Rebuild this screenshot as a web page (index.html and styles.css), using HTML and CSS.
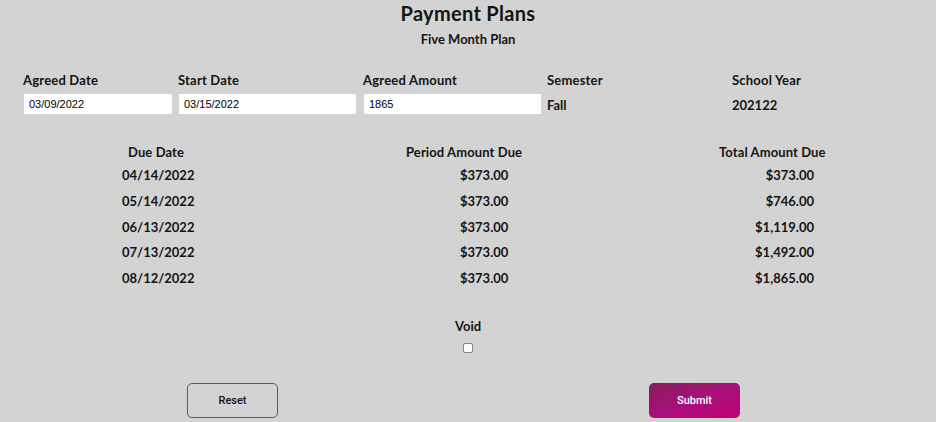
FILE: index.html
```html
<!DOCTYPE html>
<html>
<head>
<meta charset="utf-8">
<link rel="stylesheet" href="styles.css">
</head>
<body>
<div class="page">
  <header class="head">
    <h1 class="title">Payment Plans</h1>
    <h2 class="subtitle">Five Month Plan</h2>
  </header>

  <section class="fields">
    <div class="field f1">
      <label class="lbl">Agreed Date</label>
      <input class="inp w1" type="text" value="03/09/2022">
    </div>
    <div class="field f2">
      <label class="lbl">Start Date</label>
      <input class="inp w2" type="text" value="03/15/2022">
    </div>
    <div class="field f3">
      <label class="lbl">Agreed Amount</label>
      <input class="inp w2" type="text" value="1865">
    </div>
    <div class="field f4">
      <label class="lbl">Semester</label>
      <div class="val">Fall</div>
    </div>
    <div class="field f5">
      <label class="lbl">School Year</label>
      <div class="val">202122</div>
    </div>
  </section>

  <section class="sched">
    <div class="col c1">
      <div class="th">Due Date</div>
      <div class="td">04/14/2022</div>
      <div class="td">05/14/2022</div>
      <div class="td">06/13/2022</div>
      <div class="td">07/13/2022</div>
      <div class="td">08/12/2022</div>
    </div>
    <div class="col c2">
      <div class="th">Period Amount Due</div>
      <div class="td">$373.00</div>
      <div class="td">$373.00</div>
      <div class="td">$373.00</div>
      <div class="td">$373.00</div>
      <div class="td">$373.00</div>
    </div>
    <div class="col c3">
      <div class="th">Total Amount Due</div>
      <div class="td">$373.00</div>
      <div class="td">$746.00</div>
      <div class="td">$1,119.00</div>
      <div class="td">$1,492.00</div>
      <div class="td">$1,865.00</div>
    </div>
  </section>

  <section class="void">
    <div class="void-lbl">Void</div>
    <span class="chk"></span>
  </section>

  <section class="actions">
    <button class="btn reset">Reset</button>
    <button class="btn submit">Submit</button>
  </section>
</div>
</body>
</html>
```

FILE: styles.css
```css
* { box-sizing: border-box; }
html, body { margin: 0; padding: 0; }
body {
  width: 936px;
  height: 422px;
  overflow: hidden;
  background: #d3d3d3;
  font-family: "Lato", "DejaVu Sans", sans-serif;
  font-weight: 700;
  color: #141414;
}
.page { width: 936px; }

.head { text-align: center; padding-top: 1px; }
.title {
  margin: 0;
  font-size: 20px;
  line-height: 24px;
  font-weight: 700;
  letter-spacing: 0.3px;
}
.subtitle {
  margin: 6px 0 0;
  font-size: 13px;
  line-height: 16px;
  font-weight: 700;
}

.fields {
  display: flex;
  padding-left: 23px;
  margin-top: 25px;
}
.field { display: flex; flex-direction: column; }
.f1 { width: 155px; }
.f2 { width: 185px; }
.f3 { width: 184px; }
.f4 { width: 185px; }
.lbl {
  font-size: 13px;
  line-height: 16px;
  letter-spacing: 0.2px;
  height: 22px;
}
.inp {
  height: 20px;
  border: none;
  background: #fff;
  font-family: "Liberation Sans", Arial, sans-serif;
  font-size: 11px;
  color: #000;
  padding: 0 0 0 5px;
  margin-left: 1px;
  outline: none;
}
.w1 { width: 148px; }
.w2 { width: 177px; }
.val {
  font-size: 13px;
  line-height: 20px;
  padding-top: 1px;
}

.sched {
  display: flex;
  margin-top: 29px;
}
.col { display: flex; flex-direction: column; }
.th {
  font-size: 13px;
  line-height: 16px;
  height: 23px;
  letter-spacing: 0.1px;
}
.td {
  font-size: 13px;
  line-height: 16px;
  height: 25.8px;
  letter-spacing: 0;
}
.c1 { width: 312px; padding-left: 122px; }
.c1 .th { padding-left: 6px; }
.c2 { width: 312px; padding-left: 94px; }
.c2 .td { padding-left: 54px; }
.c3 { width: 312px; padding-left: 95px; }
.c3 .td { width: 95px; text-align: right; }

.void {
  display: flex;
  flex-direction: column;
  align-items: center;
  margin-top: 22px;
}
.void-lbl {
  font-size: 13px;
  line-height: 16px;
}
.chk {
  display: block;
  width: 10px;
  height: 10px;
  margin-top: 9px;
  background: #fff;
  border: 1px solid #80808c;
  border-radius: 2px;
}

.actions {
  display: flex;
  margin-top: 30px;
  padding-left: 187px;
}
.btn {
  width: 91px;
  height: 35px;
  border-radius: 5px;
  font-family: "Roboto", "Liberation Sans", sans-serif;
  font-size: 11px;
  font-weight: 500;
  cursor: pointer;
}
.reset {
  background: transparent;
  border: 1px solid #5a5a5a;
  color: #111;
}
.submit {
  margin-left: 371px;
  border: none;
  color: #fff;
  background: linear-gradient(160deg, #861c5d 0%, #a8107a 50%, #c10078 100%);
}
```
